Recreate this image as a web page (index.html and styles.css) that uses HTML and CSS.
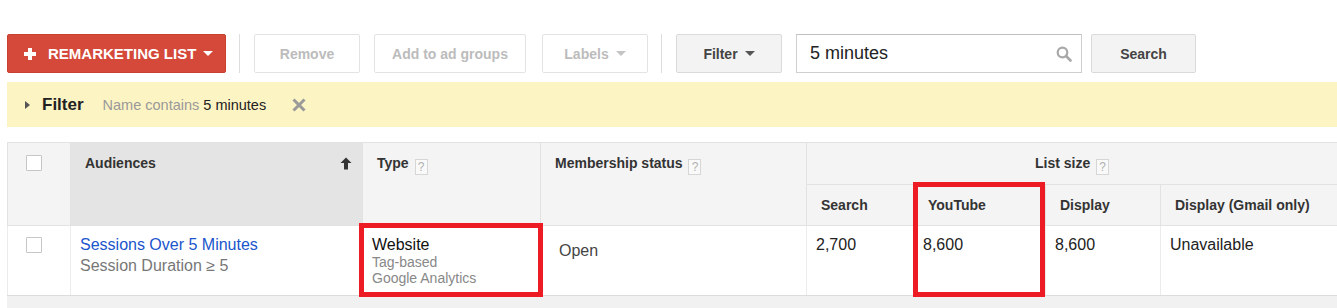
FILE: index.html
```html
<!DOCTYPE html>
<html>
<head>
<meta charset="utf-8">
<link rel="stylesheet" href="styles.css">
</head>
<body>
<div class="toolbar">
  <button class="btn btn-red">
    <svg class="plus" width="12" height="12" viewBox="0 0 12 12"><path d="M4 0h4v4h4v4H8v4H4V8H0V4h4z" fill="#fff"/></svg>
    <span>REMARKETING LIST</span>
    <span class="caret caret-white"></span>
  </button>
  <div class="sep"></div>
  <button class="btn btn-off w-remove">Remove</button>
  <button class="btn btn-off w-add">Add to ad groups</button>
  <button class="btn btn-off w-labels">Labels <span class="caret caret-light"></span></button>
  <div class="sep"></div>
  <button class="btn btn-grey w-filter">Filter <span class="caret caret-dark"></span></button>
  <div class="search-box">
    <span class="search-text">5 minutes</span>
    <svg class="mag" width="16" height="16" viewBox="0 0 16 16"><circle cx="6.5" cy="6.5" r="4.8" fill="none" stroke="#a8a8a8" stroke-width="2.2"/><path d="M10 10l4.5 4.5" stroke="#a8a8a8" stroke-width="2.6" stroke-linecap="round"/></svg>
  </div>
  <button class="btn btn-grey w-search">Search</button>
</div>

<div class="filterbar">
  <span class="tri"></span>
  <span class="fb-title">Filter</span>
  <span class="fb-desc">Name contains <span class="fb-val">5 minutes</span></span>
  <svg class="fb-x" width="14" height="14" viewBox="0 0 14 14"><path d="M1.5 1.5l11 11M12.5 1.5l-11 11" stroke="#9a9a9a" stroke-width="3"/></svg>
</div>

<div class="table-wrap">
  <table class="grid">
    <colgroup>
      <col class="c-cb"><col class="c-aud"><col class="c-type"><col class="c-mem">
      <col class="c-search"><col class="c-yt"><col class="c-disp"><col class="c-gmail">
    </colgroup>
    <thead>
      <tr class="hr1">
        <th rowspan="2" class="th-cb"><span class="cbox"></span></th>
        <th rowspan="2" class="th-sorted">
          <div class="th-flex">
            <span>Audiences</span>
            <svg class="sort" width="12" height="13" viewBox="0 0 12 13"><path d="M6 0.5L11.5 6H8v6.5H4V6H0.5z" fill="#333"/></svg>
          </div>
        </th>
        <th rowspan="2">Type <span class="help">?</span></th>
        <th rowspan="2">Membership status <span class="help">?</span></th>
        <th colspan="4" class="th-center">List size <span class="help">?</span></th>
      </tr>
      <tr class="hr2">
        <th class="th-sub">Search</th>
        <th class="th-sub">YouTube</th>
        <th class="th-sub">Display</th>
        <th class="th-sub">Display (Gmail only)</th>
      </tr>
    </thead>
    <tbody>
      <tr class="drow">
        <td class="td-cb"><span class="cbox"></span></td>
        <td>
          <a class="aud-link">Sessions Over 5 Minutes</a>
          <div class="aud-sub">Session Duration ≥ 5</div>
        </td>
        <td>
          <div class="type-main">Website</div>
          <div class="type-sub">Tag-based</div>
          <div class="type-sub">Google Analytics</div>
        </td>
        <td class="td-mem">Open</td>
        <td>2,700</td>
        <td>8,600</td>
        <td>8,600</td>
        <td>Unavailable</td>
      </tr>
    </tbody>
  </table>
  <div class="table-foot"></div>
  <div class="mark mark-type"></div>
  <div class="mark mark-yt"></div>
</div>
</body>
</html>
```

FILE: styles.css
```css
html, body {
  margin: 0;
  padding: 0;
  background: #fff;
  overflow: hidden;
}
body {
  font-family: "Liberation Sans", Arial, sans-serif;
  color: #222;
  width: 1337px;
  height: 308px;
}

/* toolbar */
.toolbar {
  display: flex;
  align-items: center;
  margin-top: 34px;
  padding-left: 7px;
  height: 39px;
}
.btn {
  height: 39px;
  box-sizing: border-box;
  font-family: "Liberation Sans", Arial, sans-serif;
  font-weight: bold;
  font-size: 14px;
  border-radius: 2px;
  display: flex;
  align-items: center;
  justify-content: center;
  padding: 0;
  margin: 0;
}
.btn-red {
  width: 219px;
  background: #d4493a;
  border: 1px solid #c8402f;
  color: #fff;
  font-size: 15px;
  justify-content: flex-start;
  padding-left: 16px;
}
.btn-red .plus { margin-right: 12px; }
.btn-red .caret { margin-left: 7px; }
.sep {
  width: 1px;
  height: 39px;
  background: #dedede;
  margin: 0 14px 0 13px;
}
.btn-off {
  background: #fff;
  border: 1px solid #e3e3e3;
  color: #bcbcbc;
}
.w-remove { width: 106px; margin-right: 14px; }
.w-add { width: 152px; margin-right: 16px; }
.w-labels { width: 106px; margin-right: 0; }
.btn-grey {
  background: #f3f3f3;
  border: 1px solid #dadada;
  color: #444;
}
.w-filter { width: 106px; margin-right: 14px; }
.w-search { width: 105px; margin-left: 9px; }
.caret {
  display: inline-block;
  width: 0;
  height: 0;
  border-left: 5px solid transparent;
  border-right: 5px solid transparent;
  border-top: 5px solid #fff;
  margin-left: 7px;
}
.caret-light { border-top-color: #c4c4c4; }
.caret-dark { border-top-color: #555; }
.search-box {
  width: 286px;
  height: 39px;
  box-sizing: border-box;
  border: 1px solid #cfcfcf;
  border-top-color: #c0c0c0;
  display: flex;
  align-items: center;
  padding: 0 9px 0 13px;
}
.search-text {
  flex: 1;
  font-size: 18px;
  color: #222;
}
.mag { display: block; }

/* filter bar */
.filterbar {
  margin-top: 9px;
  margin-left: 7px;
  height: 45px;
  background: #fdf4c4;
  display: flex;
  align-items: center;
  padding-left: 18px;
}
.tri {
  width: 0;
  height: 0;
  border-top: 4px solid transparent;
  border-bottom: 4px solid transparent;
  border-left: 5px solid #555;
  margin-right: 12px;
}
.fb-title {
  font-weight: bold;
  font-size: 17px;
  color: #222;
  margin-right: 19px;
}
.fb-desc {
  font-size: 14.5px;
  color: #999;
}
.fb-val { color: #222; }
.fb-x { margin-left: 26px; display: block; }

/* table */
.table-wrap {
  position: relative;
  margin-top: 15px;
  margin-left: 7px;
}
.grid {
  border-collapse: collapse;
  table-layout: fixed;
  width: 1330px;
  font-family: "Liberation Sans", Arial, sans-serif;
}
.c-cb { width: 63px; }
.c-aud { width: 292px; }
.c-type { width: 178px; }
.c-mem { width: 266px; }
.c-search { width: 107px; }
.c-yt { width: 132px; }
.c-disp { width: 115px; }
.c-gmail { width: 177px; }

.grid th {
  background: #f4f4f4;
  border: 1px solid #e2e2e2;
  font-size: 14px;
  font-weight: bold;
  color: #333;
  text-align: left;
  vertical-align: top;
  padding: 12px 14px 0 14px;
  box-sizing: border-box;
}
.hr1 { height: 42px; }
.hr2 { height: 41px; }
.grid th.th-cb { padding: 12px 0 0 18px; }
.grid th.th-sorted { background: #e4e4e4; padding-right: 10px; }
.th-flex { display: flex; justify-content: space-between; align-items: center; }
.sort { display: block; }
.grid th.th-center { text-align: center; }
.grid th.th-sub { vertical-align: middle; padding-top: 0; padding-bottom: 0; }
.help {
  display: inline-block;
  width: 13px;
  height: 16px;
  line-height: 15px;
  box-sizing: border-box;
  border: 1px solid #d6d6d6;
  background: #f9f9f9;
  color: #b0b0b0;
  font-size: 12px;
  font-weight: normal;
  text-align: center;
  vertical-align: -3px;
  margin-left: 2px;
}
.cbox {
  display: inline-block;
  width: 16px;
  height: 16px;
  box-sizing: border-box;
  border: 1px solid #c6c6c6;
  background: #fff;
  border-radius: 1px;
}

.drow { height: 70px; }
.grid td {
  border: 1px solid #ececec;
  border-top-color: #e0e0e0;
  border-bottom-color: #dcdcdc;
  vertical-align: top;
  padding: 9px 8px 0 9px;
  font-size: 16px;
  color: #222;
  line-height: 19px;
}
.grid td.td-cb { padding: 11px 0 0 18px; }
.aud-link { color: #1a55cc; text-decoration: none; }
.aud-sub { color: #777; margin-top: 2px; }
.type-main { color: #111; }
.type-sub { color: #888; font-size: 14px; line-height: 16px; }
.grid td.td-mem { padding: 15px 0 0 18px; color: #444; }

.table-foot {
  height: 20px;
  background: #f1f1f1;
}

.mark {
  position: absolute;
  border: 5px solid #ed1c24;
  box-sizing: border-box;
}
.mark-type { left: 352px; top: 81px; width: 184px; height: 74px; }
.mark-yt { left: 906px; top: 40px; width: 132px; height: 115px; }
```
